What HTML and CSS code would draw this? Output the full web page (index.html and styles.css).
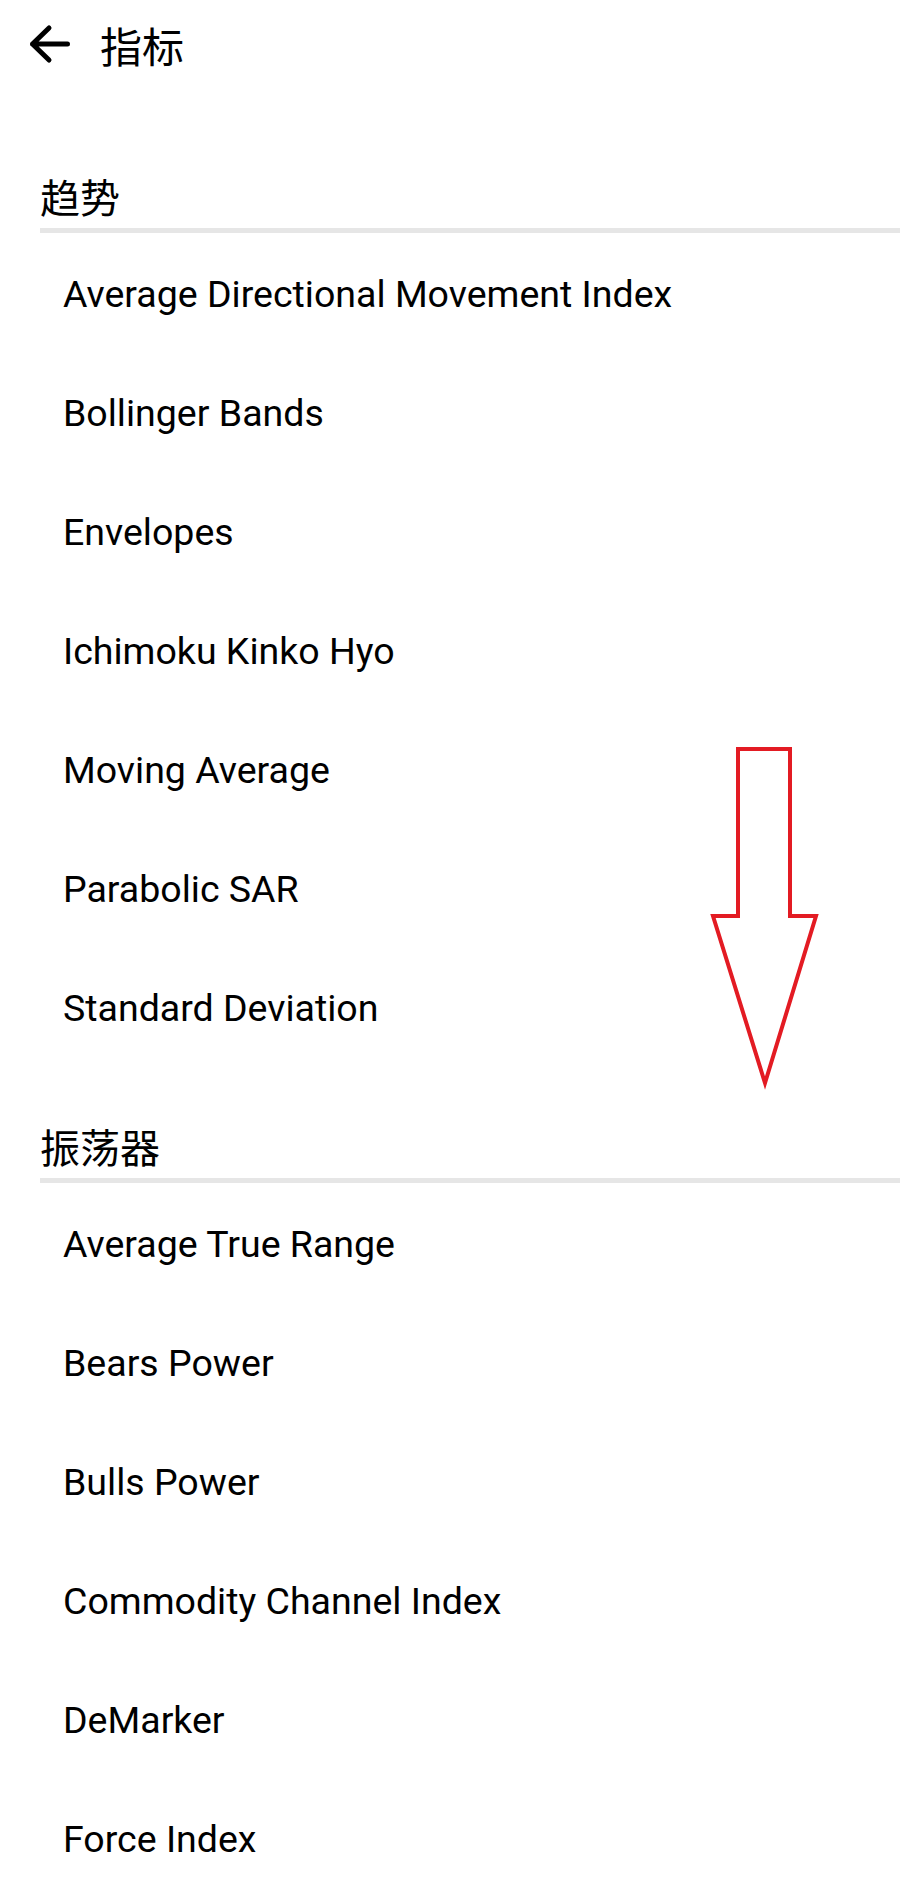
FILE: index.html
```html
<!DOCTYPE html>
<html lang="zh">
<head>
<meta charset="utf-8">
<title>指标</title>
<link rel="stylesheet" href="styles.css">
</head>
<body>
<div class="page">
  <header class="appbar">
    <svg class="back" width="56" height="50" viewBox="0 0 56 50" aria-hidden="true">
      <path d="M14.5 24 H49.5 M31 8 L14.5 24 L31 40" fill="none" stroke="#000" stroke-width="5" stroke-linecap="round" stroke-linejoin="round"/>
    </svg>
    <h1 class="title">指标</h1>
  </header>

  <main class="list">
    <section class="section">
      <h2 class="section-title">趋势</h2>
      <div class="divider"></div>
      <ul class="items">
        <li class="item">Average Directional Movement Index</li>
        <li class="item">Bollinger Bands</li>
        <li class="item">Envelopes</li>
        <li class="item">Ichimoku Kinko Hyo</li>
        <li class="item">Moving Average</li>
        <li class="item">Parabolic SAR</li>
        <li class="item">Standard Deviation</li>
      </ul>
    </section>

    <section class="section">
      <h2 class="section-title">振荡器</h2>
      <div class="divider"></div>
      <ul class="items">
        <li class="item">Average True Range</li>
        <li class="item">Bears Power</li>
        <li class="item">Bulls Power</li>
        <li class="item">Commodity Channel Index</li>
        <li class="item">DeMarker</li>
        <li class="item">Force Index</li>
      </ul>
    </section>
  </main>

  <svg class="scroll-arrow" width="120" height="360" viewBox="0 0 120 360" aria-hidden="true">
    <polygon points="33,9 85,9 85,176 111,176 60,343 8,176 33,176" fill="none" stroke="#e31b23" stroke-width="4" stroke-linejoin="miter"/>
  </svg>
</div>
</body>
</html>
```

FILE: styles.css
```css
html, body {
  margin: 0;
  padding: 0;
  background: #ffffff;
}

body {
  font-family: Roboto, "Noto Sans", "Noto Sans CJK SC", sans-serif;
  color: #000000;
}

.page {
  position: relative;
  width: 900px;
  height: 1886px;
  overflow: hidden;
}

.appbar {
  display: flex;
  align-items: center;
  height: 90px;
  padding-left: 18px;
}

.back {
  display: block;
  flex: none;
}

.title {
  margin: 0 0 0 26px;
  font-family: "Noto Sans CJK SC", sans-serif;
  font-size: 42px;
  font-weight: 400;
  line-height: 44px;
}

.list {
  padding-top: 26px;
}

.section {
  padding-top: 59px;
  padding-left: 40px;
}

.section-title {
  margin: 0 0 11px 0;
  font-family: "Noto Sans CJK SC", sans-serif;
  font-size: 40px;
  font-weight: 400;
  line-height: 42px;
}

.divider {
  height: 5px;
  background: #e6e6e6;
}

.items {
  list-style: none;
  margin: 0;
  padding: 0;
}

.item {
  box-sizing: border-box;
  display: flex;
  align-items: center;
  height: 119px;
  padding-left: 23px;
  padding-top: 2px;
  font-size: 37.5px;
  line-height: 42px;
}

.scroll-arrow {
  position: absolute;
  left: 705px;
  top: 740px;
}
```
